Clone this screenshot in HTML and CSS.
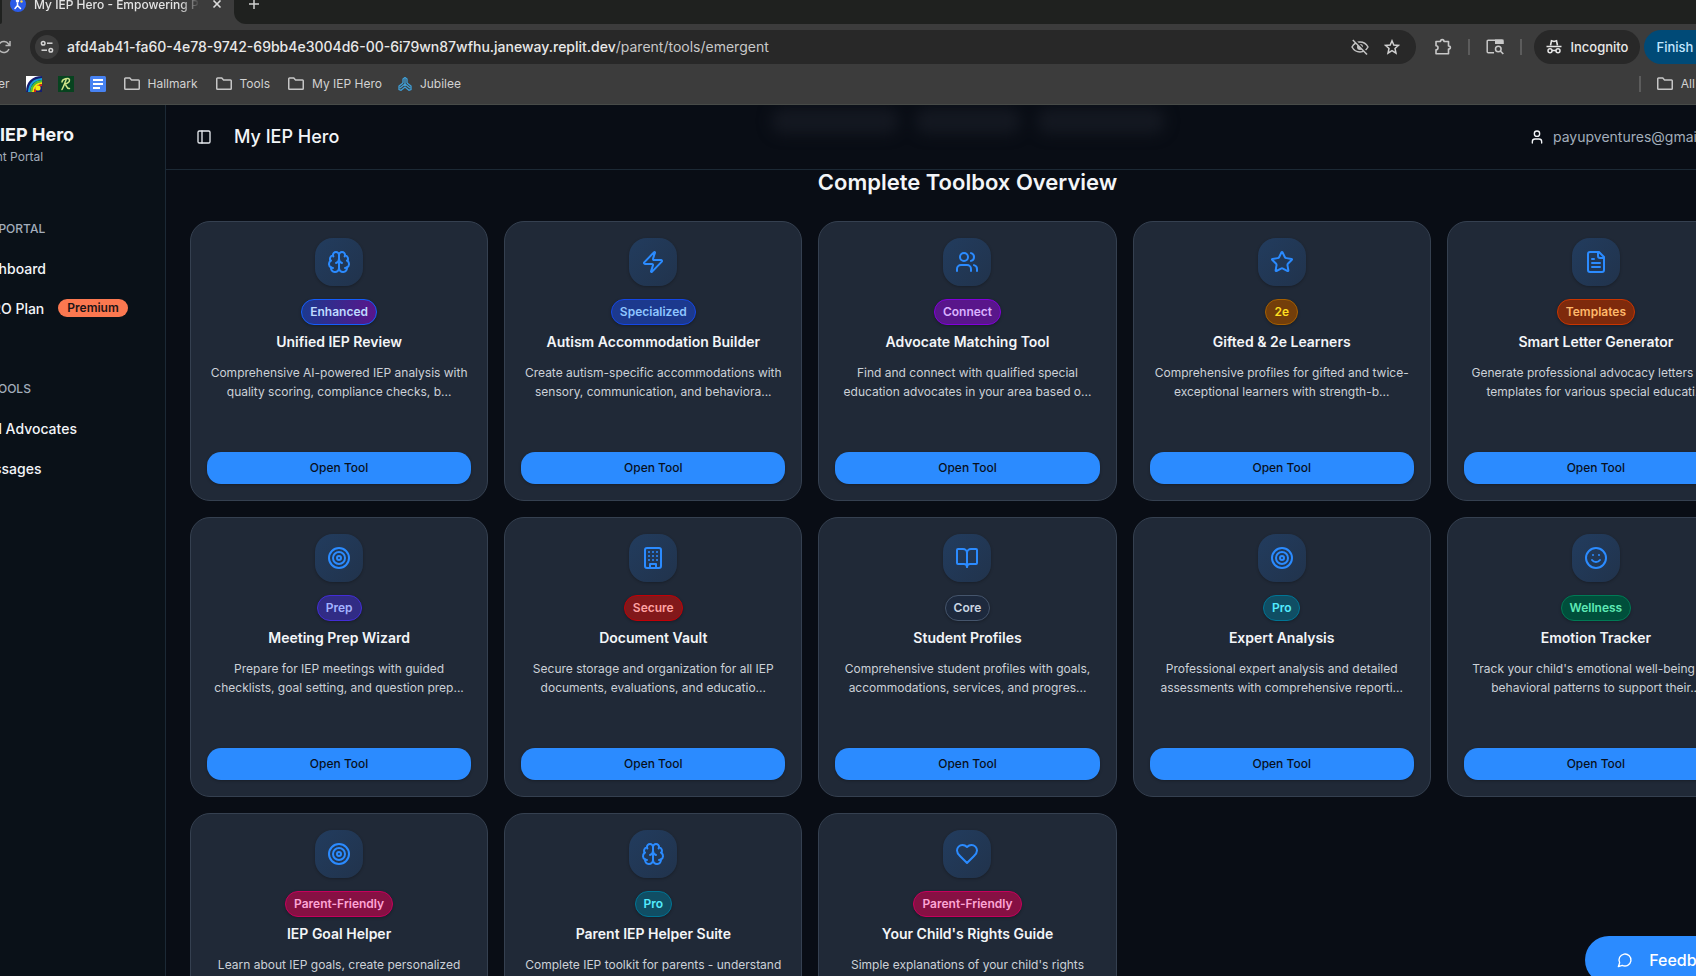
FILE: index.html
```html
<!DOCTYPE html>
<html lang="en">
<head>
<meta charset="utf-8">
<title>My IEP Hero</title>
<link rel="stylesheet" href="styles.css">
</head>
<body>
<svg class="sprite" aria-hidden="true">
  <symbol id="brain" viewBox="0 0 24 24"><path d="M12 5a3 3 0 1 0-5.997.125 4 4 0 0 0-2.526 5.77 4 4 0 0 0 .556 6.588A4 4 0 1 0 12 18Z"/><path d="M12 5a3 3 0 1 1 5.997.125 4 4 0 0 1 2.526 5.77 4 4 0 0 1-.556 6.588A4 4 0 1 1 12 18Z"/><path d="M15 13a4.5 4.5 0 0 1-3-4 4.5 4.5 0 0 1-3 4"/><path d="M17.599 6.5a3 3 0 0 0 .399-1.375"/><path d="M6.003 5.125A3 3 0 0 0 6.401 6.5"/><path d="M3.477 10.896a4 4 0 0 1 .585-.396"/><path d="M19.938 10.5a4 4 0 0 1 .585.396"/><path d="M6 18a4 4 0 0 1-1.967-.516"/><path d="M19.967 17.484A4 4 0 0 1 18 18"/></symbol>
  <symbol id="zap" viewBox="0 0 24 24"><path d="M4 14a1 1 0 0 1-.78-1.63l9.9-10.2a.5.5 0 0 1 .86.46l-1.92 6.02A1 1 0 0 0 13 10h7a1 1 0 0 1 .78 1.63l-9.9 10.2a.5.5 0 0 1-.86-.46l1.92-6.02A1 1 0 0 0 11 14z"/></symbol>
  <symbol id="users" viewBox="0 0 24 24"><path d="M16 21v-2a4 4 0 0 0-4-4H6a4 4 0 0 0-4 4v2"/><circle cx="9" cy="7" r="4"/><path d="M22 21v-2a4 4 0 0 0-3-3.87"/><path d="M16 3.13a4 4 0 0 1 0 7.75"/></symbol>
  <symbol id="star" viewBox="0 0 24 24"><path d="M11.525 2.295a.53.53 0 0 1 .95 0l2.31 4.679a2.123 2.123 0 0 0 1.595 1.16l5.166.756a.53.53 0 0 1 .294.904l-3.736 3.638a2.123 2.123 0 0 0-.611 1.878l.882 5.14a.53.53 0 0 1-.771.56l-4.618-2.428a2.122 2.122 0 0 0-1.973 0L6.396 21.01a.53.53 0 0 1-.77-.56l.881-5.139a2.122 2.122 0 0 0-.611-1.879L2.16 9.795a.53.53 0 0 1 .294-.906l5.165-.755a2.122 2.122 0 0 0 1.597-1.16z"/></symbol>
  <symbol id="file" viewBox="0 0 24 24"><path d="M15 2H6a2 2 0 0 0-2 2v16a2 2 0 0 0 2 2h12a2 2 0 0 0 2-2V7Z"/><path d="M14 2v4a2 2 0 0 0 2 2h4"/><path d="M10 9H8"/><path d="M16 13H8"/><path d="M16 17H8"/></symbol>
  <symbol id="target" viewBox="0 0 24 24"><circle cx="12" cy="12" r="10"/><circle cx="12" cy="12" r="6"/><circle cx="12" cy="12" r="2"/></symbol>
  <symbol id="building" viewBox="0 0 24 24"><rect width="16" height="20" x="4" y="2" rx="2"/><path d="M9 22v-4h6v4"/><path d="M8 6h.01M16 6h.01M12 6h.01M12 10h.01M12 14h.01M16 10h.01M16 14h.01M8 10h.01M8 14h.01"/></symbol>
  <symbol id="book" viewBox="0 0 24 24"><path d="M12 7v14"/><path d="M3 18a1 1 0 0 1-1-1V4a1 1 0 0 1 1-1h5a4 4 0 0 1 4 4 4 4 0 0 1 4-4h5a1 1 0 0 1 1 1v13a1 1 0 0 1-1 1h-6a3 3 0 0 0-3 3 3 3 0 0 0-3-3z"/></symbol>
  <symbol id="smile" viewBox="0 0 24 24"><circle cx="12" cy="12" r="10"/><path d="M8 14s1.500 2 4 2 4-2 4-2"/><path d="M9 9h.01M15 9h.01"/></symbol>
  <symbol id="heart" viewBox="0 0 24 24"><path d="M19 14c1.490-1.460 3-3.210 3-5.500A5.500 5.500 0 0 0 16.500 3c-1.760 0-3 .5-4.500 2-1.500-1.500-2.740-2-4.500-2A5.500 5.500 0 0 0 2 8.500c0 2.300 1.500 4.050 3 5.500l7 7Z"/></symbol>
  <symbol id="panel" viewBox="0 0 24 24"><rect width="18" height="18" x="3" y="3" rx="2"/><path d="M9 3v18"/></symbol>
  <symbol id="user" viewBox="0 0 24 24"><path d="M19 21v-2a4 4 0 0 0-4-4H9a4 4 0 0 0-4 4v2"/><circle cx="12" cy="7" r="4"/></symbol>
  <symbol id="chat" viewBox="0 0 24 24"><path d="M7.900 20A9 9 0 1 0 4 16.100L2 22Z"/></symbol>
  <symbol id="folder" viewBox="0 0 16 16"><path d="M.75 12.500v-9.700a.8.8 0 0 1 .8-.8h4.200l1.800 2h6.900a.8.8 0 0 1 .8.8v7.700a.8.8 0 0 1-.8.8H1.550a.8.8 0 0 1-.8-.8z"/></symbol>
</svg>

<div class="browser">
  <div class="tabstrip">
    <div class="tab-prev"></div>
    <div class="tab">
      <svg class="i16" viewBox="0 0 16 16"><circle cx="8" cy="8" r="8" fill="#2b5be8"/><circle cx="7.500" cy="5" r="1.700" fill="#fff"/><path d="M7.500 7v2.500M7.500 9.500l-2.500 3M7.500 9.500l3 3" fill="none" stroke="#fff" stroke-width="1.500" stroke-linecap="round"/><circle cx="11.500" cy="5.500" r="1.200" fill="#ffd84a"/></svg>
      <span class="tab-title">My IEP Hero - Empowering Parents</span>
      <button class="plain" aria-label="Close tab"><svg class="i10" viewBox="0 0 10 10"><path d="M1.500 1.500l7 7M8.500 1.500l-7 7" stroke="#dcdcdc" stroke-width="1.600"/></svg></button>
    </div>
    <div class="strip-rest">
      <button class="plain" aria-label="New tab"><svg class="i10" viewBox="0 0 10 10"><path d="M5 0v10M0 5h10" stroke="#d0d0d0" stroke-width="1.500"/></svg></button>
    </div>
  </div>
  <div class="toolbar">
    <button class="plain reload" aria-label="Reload"><svg class="i14" viewBox="0 0 14 14"><path d="M12 9a5.500 5.500 0 1 1-.6-5.200L13 5.500M13 1v4.500H8.500" fill="none" stroke="#b8b8b8" stroke-width="1.500"/></svg></button>
    <div class="omnibox">
      <button class="site-info" aria-label="Site information"><svg class="i14" viewBox="0 0 14 14"><g fill="none" stroke="#d6d6d6" stroke-width="1.500"><circle cx="3.200" cy="3.200" r="1.800"/><path d="M7 3.200h5.500"/><circle cx="10.800" cy="10.200" r="1.800"/><path d="M1.500 10.200H7"/></g></svg></button>
      <div class="url">afd4ab41-fa60-4e78-9742-69bb4e3004d6-00-6i79wn87wfhu.janeway.replit.dev<span class="path">/parent/tools/emergent</span></div>
      <button class="plain" aria-label="Tracking blocked"><svg class="i18" viewBox="0 0 18 18"><path d="M1 9c1.800-3.200 4.700-4.900 8-4.900s6.200 1.700 8 4.900c-1.800 3.200-4.700 4.900-8 4.900S2.800 12.200 1 9z" fill="none" stroke="#c4c4c4" stroke-width="1.500"/><circle cx="9" cy="9" r="3" fill="#c4c4c4"/><path d="M3 1.500l14 14.500" stroke="#282828" stroke-width="2"/><path d="M1.800 2l14.200 14.500" stroke="#c4c4c4" stroke-width="1.500"/></svg></button>
      <button class="plain" aria-label="Bookmark this page"><svg class="i16" viewBox="0 0 16 16"><path d="M8 1.800l1.800 4.200 4.700.4-3.500 3.100 1 4.600L8 11.700l-4 2.400 1-4.600L1.500 6.400l4.700-.4z" fill="none" stroke="#d0d0d0" stroke-width="1.500"/></svg></button>
    </div>
    <button class="plain ext" aria-label="Extensions"><svg class="i18" viewBox="0 0 18 18"><path d="M2 3.500h4.500C6.500 1 10 1 10 3.500h4.500V8c2.500 0 2.500 3 0 3v4.800H2v-4c2.700 0 2.700-4 0-4z" fill="none" stroke="#c8c8c8" stroke-width="1.600" stroke-linejoin="round"/></svg></button>
    <span class="rule"></span>
    <button class="plain" aria-label="Search side panel"><svg class="i18" viewBox="0 0 18 18"><path d="M8 14.800H2.200a1 1 0 0 1-1-1V3.200a1 1 0 0 1 1-1h13.600a1 1 0 0 1 1 1V6" fill="none" stroke="#c8c8c8" stroke-width="1.500"/><path d="M9 1.500h8.500V6H9z" fill="#c8c8c8"/><circle cx="12.300" cy="11" r="2.800" fill="none" stroke="#c8c8c8" stroke-width="1.500"/><path d="M14.300 13l3 3" stroke="#c8c8c8" stroke-width="1.600"/></svg></button>
    <span class="rule"></span>
    <button class="pill incognito"><svg class="i16" viewBox="0 0 16 16"><path d="M4.500 6.500l1-4.700 2.500.7 2.500-.7 1 4.700" fill="none" stroke="#e6e6e6" stroke-width="1.600"/><path d="M.5 7.500h15" stroke="#e6e6e6" stroke-width="1.500"/><g fill="none" stroke="#e6e6e6" stroke-width="1.500"><circle cx="4" cy="11.800" r="2"/><circle cx="12" cy="11.800" r="2"/><path d="M6 11.500h4"/></g></svg>Incognito</button>
    <button class="pill finish">Finish update</button>
  </div>
  <nav class="bookmarks" aria-label="Bookmarks">
    <a href="#">er</a>
    <a href="#" aria-label="Rainbow"><svg class="i16" viewBox="0 0 16 16"><path fill="#fff" d="M0 0h16v16H0z"/><path fill="#141d72" d="M0 16C0 6 6 0 16 0v16z"/><g fill="none" stroke-width="2"><path d="M3 16C3.500 8 8 3.500 16 3" stroke="#18a0d8"/><path d="M5 16c.5-6 4-10.500 11-11" stroke="#45c83a"/><path d="M7 16c.5-5 3-8.500 9-9" stroke="#f6e600"/><path d="M8.800 16c.3-3 2.700-6.500 7.200-7" stroke="#e02818"/></g><circle cx="12" cy="12" r="2.600" fill="#f4ee18"/></svg></a>
    <a href="#" aria-label="Script R"><svg class="i16" viewBox="0 0 16 16"><path fill="#07431f" d="M0 0h16v16H0z"/><path d="M4 6C4 3 11 1 11.500 3.800 12 6.500 8 8 6.500 8c2 0 2 5.500 5 4.500M8.500 3C7 6 6 10 4 13.500" fill="none" stroke="#cfe58a" stroke-width="1.500" stroke-linecap="round"/></svg></a>
    <a href="#" aria-label="Docs"><svg class="i16" viewBox="0 0 16 16"><rect width="16" height="16" rx="1.500" fill="#4782f2"/><path d="M3 4h10M3 8h10M3 12h7" stroke="#fff" stroke-width="2"/></svg></a>
    <a href="#" class="labelled"><svg class="i16 folder"><use href="#folder"/></svg>Hallmark</a>
    <a href="#" class="labelled"><svg class="i16 folder"><use href="#folder"/></svg>Tools</a>
    <a href="#" class="labelled"><svg class="i16 folder"><use href="#folder"/></svg>My IEP Hero</a>
    <a href="#"><svg class="i14" viewBox="0 0 14 14"><g fill="none" stroke="#3f9fd8" stroke-width="1.300"><path d="M5 6V2l2-1.500L9 2v4M7 2v5"/><path d="M5 6L1 9v3.500l2 .8L7 10l4 3.300 2-.8V9L9 6M7 7l-5 4M7 7l5 4M7 7v2"/></g></svg>Jubilee</a>
    <span class="rule push"></span>
    <a href="#"><svg class="i16 folder"><use href="#folder"/></svg>All Bookmarks</a>
  </nav>
</div>

<div class="app">
  <aside class="sidebar">
    <div class="brand"><strong>My IEP Hero</strong><span>Parent Portal</span></div>
    <nav class="group">
      <h2>Parent Portal</h2>
      <a href="#">Dashboard</a>
      <a href="#">HERO Plan <span class="premium">Premium</span></a>
    </nav>
    <nav class="group">
      <h2>Extra Tools</h2>
      <a href="#">Find Advocates</a>
      <a href="#">Messages</a>
    </nav>
  </aside>
  <div class="main">
    <header class="header">
      <div class="chips" aria-hidden="true"><i></i><i></i><i></i></div>
      <button class="toggle" aria-label="Toggle sidebar"><svg class="i16 line"><use href="#panel"/></svg></button>
      <h1>My IEP Hero</h1>
      <div class="account"><svg class="i16 line"><use href="#user"/></svg><span>payupventures@gmail.com</span></div>
    </header>
    <main class="content">
      <h2 class="heading">Complete Toolbox Overview</h2>
      <div class="grid">
        <article class="card"><div class="tile"><svg><use href="#brain"/></svg></div><span class="badge enhanced">Enhanced</span><h3>Unified IEP Review</h3><p>Comprehensive AI-powered IEP analysis with<br>quality scoring, compliance checks, b...</p><button>Open Tool</button></article>
        <article class="card"><div class="tile"><svg><use href="#zap"/></svg></div><span class="badge blue">Specialized</span><h3>Autism Accommodation Builder</h3><p>Create autism-specific accommodations with<br>sensory, communication, and behaviora...</p><button>Open Tool</button></article>
        <article class="card"><div class="tile"><svg><use href="#users"/></svg></div><span class="badge purple">Connect</span><h3>Advocate Matching Tool</h3><p>Find and connect with qualified special<br>education advocates in your area based o...</p><button>Open Tool</button></article>
        <article class="card"><div class="tile"><svg><use href="#star"/></svg></div><span class="badge yellow">2e</span><h3>Gifted &amp; 2e Learners</h3><p>Comprehensive profiles for gifted and twice-<br>exceptional learners with strength-b...</p><button>Open Tool</button></article>
        <article class="card"><div class="tile"><svg><use href="#file"/></svg></div><span class="badge orange">Templates</span><h3>Smart Letter Generator</h3><p>Generate professional advocacy letters with<br>templates for various special educati...</p><button>Open Tool</button></article>
        <article class="card"><div class="tile"><svg><use href="#target"/></svg></div><span class="badge indigo">Prep</span><h3>Meeting Prep Wizard</h3><p>Prepare for IEP meetings with guided<br>checklists, goal setting, and question prep...</p><button>Open Tool</button></article>
        <article class="card"><div class="tile"><svg><use href="#building"/></svg></div><span class="badge red">Secure</span><h3>Document Vault</h3><p>Secure storage and organization for all IEP<br>documents, evaluations, and educatio...</p><button>Open Tool</button></article>
        <article class="card"><div class="tile"><svg><use href="#book"/></svg></div><span class="badge slate">Core</span><h3>Student Profiles</h3><p>Comprehensive student profiles with goals,<br>accommodations, services, and progres...</p><button>Open Tool</button></article>
        <article class="card"><div class="tile"><svg><use href="#target"/></svg></div><span class="badge cyan">Pro</span><h3>Expert Analysis</h3><p>Professional expert analysis and detailed<br>assessments with comprehensive reporti...</p><button>Open Tool</button></article>
        <article class="card"><div class="tile"><svg><use href="#smile"/></svg></div><span class="badge green">Wellness</span><h3>Emotion Tracker</h3><p>Track your child's emotional well-being and<br>behavioral patterns to support their...</p><button>Open Tool</button></article>
        <article class="card"><div class="tile"><svg><use href="#target"/></svg></div><span class="badge pink">Parent-Friendly</span><h3>IEP Goal Helper</h3><p>Learn about IEP goals, create personalized</p><button>Open Tool</button></article>
        <article class="card"><div class="tile"><svg><use href="#brain"/></svg></div><span class="badge cyan">Pro</span><h3>Parent IEP Helper Suite</h3><p>Complete IEP toolkit for parents - understand</p><button>Open Tool</button></article>
        <article class="card"><div class="tile"><svg><use href="#heart"/></svg></div><span class="badge pink">Parent-Friendly</span><h3>Your Child's Rights Guide</h3><p>Simple explanations of your child's rights</p><button>Open Tool</button></article>
      </div>
    </main>
  </div>
</div>
<button class="feedback"><svg class="i16 line"><use href="#chat"/></svg>Feedback</button>
</body>
</html>
```
FILE: styles.css
```css
* { box-sizing: border-box; }
html { height: 100%; overflow: hidden; }
body {
  margin: 0;
  height: 100%;
  overflow: hidden;
  display: flex;
  flex-direction: column;
  background: #090d15;
  color: #f3f5f8;
  font-family: Inter, "Liberation Sans", sans-serif;
}
h1, h2, h3, p { margin: 0; }
a { color: inherit; text-decoration: none; }
button { font: inherit; border: 0; cursor: pointer; }
svg { flex: none; display: block; }
.sprite { position: absolute; width: 0; height: 0; }
.i10 { width: 10px; height: 10px; }
.i14 { width: 14px; height: 14px; }
.i16 { width: 16px; height: 16px; }
.i18 { width: 18px; height: 18px; }
.line { fill: none; stroke: currentColor; stroke-width: 2; stroke-linecap: round; stroke-linejoin: round; }
.plain { background: none; padding: 0; }

/* Browser frame */
.browser {
  flex: none;
  margin-right: -68px;
  background: #3c3c3c;
  border-bottom: 1px solid #484b48;
  color: #d2d2d2;
  font-size: 12px;
}
.tabstrip { display: flex; height: 40px; margin-top: -16px; }
.tab-prev { width: 2px; background: #1f211f; border-bottom-right-radius: 12px; }
.tab { display: flex; align-items: center; width: 232px; padding: 0 12px 0 8px; color: #e4e4e4; }
.tab-title {
  width: 168px;
  margin: 0 12px 0 8px;
  overflow: hidden;
  white-space: nowrap;
  font-weight: 500;
  mask-image: linear-gradient(90deg, #000 88%, transparent);
}
.strip-rest {
  flex: 1;
  display: flex;
  align-items: center;
  padding-left: 15px;
  background: #1f211f;
  border-bottom-left-radius: 12px;
}
.toolbar { display: flex; align-items: center; height: 46px; }
.reload { margin-left: -3px; }
.omnibox {
  flex: 1;
  display: flex;
  align-items: center;
  gap: 15px;
  height: 34px;
  margin: 0 18px 0 19px;
  padding: 0 16px 0 5px;
  border-radius: 17px;
  background: #282828;
}
.site-info {
  display: grid;
  place-items: center;
  width: 24px;
  height: 24px;
  padding: 0;
  border-radius: 12px;
  background: #3c3c3c;
}
.url { flex: 1; margin-left: -7px; font-size: 14px; line-height: 18px; padding-bottom: 1px; font-weight: 500; color: #e8e8e8; white-space: nowrap; }
.path { font-weight: 400; color: #c8c8c8; }
.rule { width: 2px; height: 16px; margin: 0 16px; background: #5c5c5c; }
.pill {
  display: flex;
  align-items: center;
  gap: 8px;
  height: 34px;
  padding: 0 12px;
  border-radius: 17px;
  font-size: 13px;
  font-weight: 500;
  white-space: nowrap;
}
.incognito { margin: 0 4px 0 -4px; background: #282828; color: #e8e8e8; }
.finish { margin-right: 12px; background: #004a77; color: #c2e7ff; }
.bookmarks { display: flex; align-items: center; gap: 16px; height: 34px; margin-left: -2px; padding: 0 2px 7px 0; }
.bookmarks a { display: flex; align-items: center; gap: 8px; white-space: nowrap; }
.bookmarks .labelled { margin-left: 2px; }
.bookmarks .rule { margin: 0; }
.bookmarks .push { margin-left: auto; }
.folder { fill: none; stroke: #c6c6c6; stroke-width: 1.500; }

/* Application: wider than the window on both sides */
.app { flex: 1; display: flex; min-height: 0; margin: 0 -73px 0 -70px; }
.sidebar { flex: none; width: 236px; background: #0a1118; border-right: 1px solid #1c2935; }
.brand { display: flex; flex-direction: column; padding: 18px 0 0 38px; }
.brand strong { font-size: 18px; line-height: 24px; font-weight: 700; }
.brand span { padding-left: 2px; font-size: 12px; line-height: 20px; color: #a3adbb; }
.group { padding-top: 46px; }
.group h2 {
  margin-bottom: 3px;
  padding-left: 18px;
  font-size: 12px;
  line-height: 32px;
  font-weight: 500;
  text-transform: uppercase;
  color: #a3adbb;
}
.group a { display: flex; align-items: center; gap: 14px; height: 40px; padding-left: 43px; font-size: 14px; font-weight: 500; }
.group + .group { padding-top: 45px; }
.premium {
  padding: 0 9px;
  border-radius: 9px;
  background: #fb7850;
  color: #1c1416;
  font-size: 12px;
  line-height: 18px;
  font-weight: 600;
}
.main { flex: 1; min-width: 0; }
.header {
  position: relative;
  display: flex;
  align-items: center;
  height: 65px;
  padding: 0 24px;
  overflow: hidden;
  border-bottom: 1px solid #1c2935;
  background: #090d15;
}
.chips { position: absolute; inset: 3px 0 auto; display: flex; justify-content: center; gap: 16px; filter: blur(7px); }
.chips i { width: 128px; height: 26px; border-radius: 13px; background: #141821; }
.chips i:nth-child(2) { width: 106px; }
.toggle { display: grid; place-items: center; width: 28px; height: 28px; margin-right: 16px; padding: 0; background: none; color: #e6e9ee; }
.header h1 { font-size: 18px; line-height: 28px; font-weight: 500; }
.account { display: flex; align-items: center; gap: 8px; margin-left: auto; padding-right: 12px; font-size: 14px; line-height: 16px; }
.account span { color: #a3adbb; }
.content { padding: 0 24px; }
.heading { margin-bottom: 27px; font-size: 22px; line-height: 24px; font-weight: 600; text-align: center; }
.grid { display: grid; grid-template-columns: repeat(5, 1fr); gap: 16px; }
.card {
  display: flex;
  flex-direction: column;
  align-items: center;
  min-height: 280px;
  padding: 16px;
  border: 1px solid #354050;
  border-radius: 20px;
  background: #202937;
  text-align: center;
}
.tile {
  display: grid;
  place-items: center;
  width: 48px;
  height: 48px;
  margin-bottom: 13px;
  border-radius: 18px;
  background: linear-gradient(135deg, #223c5e, #21334c);
  box-shadow: 0 1px 3px #0004;
}
.tile svg { width: 24px; height: 24px; fill: none; stroke: #2b8bff; stroke-width: 2; stroke-linecap: round; stroke-linejoin: round; }
.badge {
  margin-bottom: 7px;
  padding: 4px 8px;
  border: 1px solid;
  border-radius: 13px;
  font-size: 12px;
  line-height: 16px;
  font-weight: 600;
  box-shadow: 0 1px 3px #0004;
}
.card h3 { margin-bottom: 11px; font-size: 14px; line-height: 20px; font-weight: 600; }
.card p { font-size: 12px; line-height: 19px; color: #ccd1d8; white-space: nowrap; }
.card button {
  width: 100%;
  height: 32px;
  margin-top: auto;
  padding: 0 0 2px;
  border-radius: 14px;
  background: #2b8bff;
  color: #08101c;
  font-size: 12px;
  font-weight: 500;
  box-shadow: 0 1px 3px #0004;
}
.enhanced { background: linear-gradient(90deg, #1c398e, #59168b); border-color: #155dfc; color: #bedbff; }
.blue { background: #1c398e; border-color: #1447e6; color: #8ec5ff; }
.purple { background: #59168b; border-color: #8200db; color: #dab2ff; }
.yellow { background: #733e0a; border-color: #a65f00; color: #ffdf20; }
.orange { background: #7e2a0c; border-color: #ca3500; color: #ffb86a; }
.indigo { background: #312c85; border-color: #432dd7; color: #a3b3ff; }
.red { background: #82181a; border-color: #c10007; color: #ffa2a2; }
.slate { background: #1d293d; border-color: #45556c; color: #cad5e2; }
.cyan { background: #104e64; border-color: #007595; color: #53eafd; }
.green { background: #004f3b; border-color: #007a55; color: #5ee9b5; }
.pink { background: #861043; border-color: #c6005c; color: #fda5d5; }
.feedback {
  position: fixed;
  right: -60px;
  bottom: -8px;
  display: flex;
  align-items: center;
  gap: 16px;
  height: 48px;
  padding: 0 32px;
  border-radius: 24px;
  background: #2b8bff;
  color: #fff;
  font-size: 16px;
  font-weight: 500;
}
```
